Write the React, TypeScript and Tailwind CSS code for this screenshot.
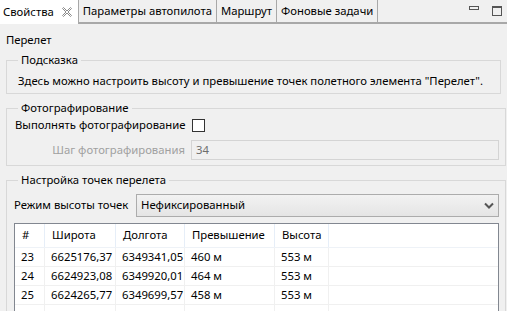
import React from "react";

const rows = [
  { n: "23", lat: "6625176,37", lon: "6349341,05", exc: "460 м", alt: "553 м" },
  { n: "24", lat: "6624923,08", lon: "6349920,01", exc: "464 м", alt: "553 м" },
  { n: "25", lat: "6624265,77", lon: "6349699,57", exc: "458 м", alt: "553 м" },
  { n: "", lat: "", lon: "", exc: "", alt: "" },
];

const cols = ["w-[30px]", "w-[71px]", "w-[69px]", "w-[90px]", "w-[54px]"];

function CloseIcon() {
  return (
    <svg width="10" height="10" viewBox="0 0 10 10" className="ml-[8px]">
      <polygon
        points="0.5,1.5 1.5,0.5 5,4 8.5,0.5 9.5,1.5 6,5 9.5,8.5 8.5,9.5 5,6 1.5,9.5 0.5,8.5 4,5"
        fill="none"
        stroke="#8a8a8a"
        strokeWidth="1"
      />
    </svg>
  );
}

function Group({ title, children, className = "" }: { title: string; children: React.ReactNode; className?: string }) {
  return (
    <fieldset className={`border border-[#d8d8d8] mx-[6px] px-[6px] ${className}`}>
      <legend className="ml-[5px] px-[3px] leading-[14px]">{title}</legend>
      {children}
    </fieldset>
  );
}

export default function App() {
  return (
    <div className="w-[507px] h-[311px] overflow-hidden bg-[#f0f0f0] text-[11.3px] text-black font-['Noto_Sans',sans-serif]">
      <div className="flex h-[24px] border-b-2 border-[#a8a8a8] bg-[#f0f0f0]">
        <div className="flex items-center bg-white pl-[3px] pr-[6px] -mb-[2px] border-r border-[#a8a8a8]">
          <span>Свойства</span>
          <CloseIcon />
        </div>
        <div className="flex items-center px-[4px] border-r border-[#a8a8a8]">Параметры автопилота</div>
        <div className="flex items-center px-[4px] border-r border-[#a8a8a8]">Маршрут</div>
        <div className="flex items-center px-[4px] border-r border-[#a8a8a8]">Фоновые задачи</div>
        <div className="flex-1" />
        <div className="flex items-start gap-[13px] pt-[6px] pr-[5px]">
          <div className="w-[10px] h-[4px] border border-[#555]" />
          <div className="w-[10px] h-[10px] border border-[#555] border-t-2" />
        </div>
      </div>

      <div className="pt-[8px] pl-[6px] leading-[16px]">Перелет</div>

      <Group title="Подсказка" className="mt-[5px] pb-[4px]">
        <div className="pl-[5px] pt-[6px] leading-[16px]">
          Здесь можно настроить высоту и превышение точек полетного элемента "Перелет".
        </div>
      </Group>

      <Group title="Фотографирование" className="mt-[7px] pb-[5px]">
        <div className="flex items-center h-[18px] mt-[1px] pl-[2px]">
          <span>Выполнять фотографирование</span>
          <div className="w-[13px] h-[13px] border border-[#333] bg-white ml-[6px]" />
        </div>
        <div className="flex items-center mt-[6px]">
          <span className="w-[178px] text-right text-[#a0a0a0] pr-[6px]">Шаг фотографирования</span>
          <div className="w-[308px] h-[20px] border border-[#d4d4d4] flex items-center pl-[4px] text-[#6d6d6d]">
            34
          </div>
        </div>
      </Group>

      <Group title="Настройка точек перелета" className="mt-[7px] h-[140px]">
        <div className="flex items-center mt-[7px] pl-[1px]">
          <span className="w-[122px]">Режим высоты точек</span>
          <div className="flex items-center justify-between w-[363px] h-[23px] border border-[#acacac] bg-gradient-to-b from-[#f2f2f2] to-[#e5e5e5] pl-[4px] pr-[4px]">
            <span>Нефиксированный</span>
            <svg width="10" height="8" viewBox="0 0 10 8">
              <path d="M1 1.5 L5 5.5 L9 1.5" fill="none" stroke="#555" strokeWidth="2" />
            </svg>
          </div>
        </div>
        <div className="mt-[6px] ml-[1px] w-[485px] border border-[#828790] bg-white h-[100px]">
          <div className="flex h-[24px] border-b border-[#eef2f7]">
            {["#", "Широта", "Долгота", "Превышение", "Высота"].map((h, i) => (
              <div key={h} className={`${cols[i]} flex items-center pl-[7px] border-r border-[#e6eef8]`}>
                {h}
              </div>
            ))}
          </div>
          {rows.map((r, ri) => (
            <div key={ri} className="flex h-[19px] border-b border-[#f0f0f0]">
              {[r.n, r.lat, r.lon, r.exc, r.alt].map((c, i) => (
                <div key={i} className={`${cols[i]} flex items-center pl-[6px] border-r border-[#f0f0f0]`}>
                  {c}
                </div>
              ))}
            </div>
          ))}
        </div>
      </Group>
    </div>
  );
}
